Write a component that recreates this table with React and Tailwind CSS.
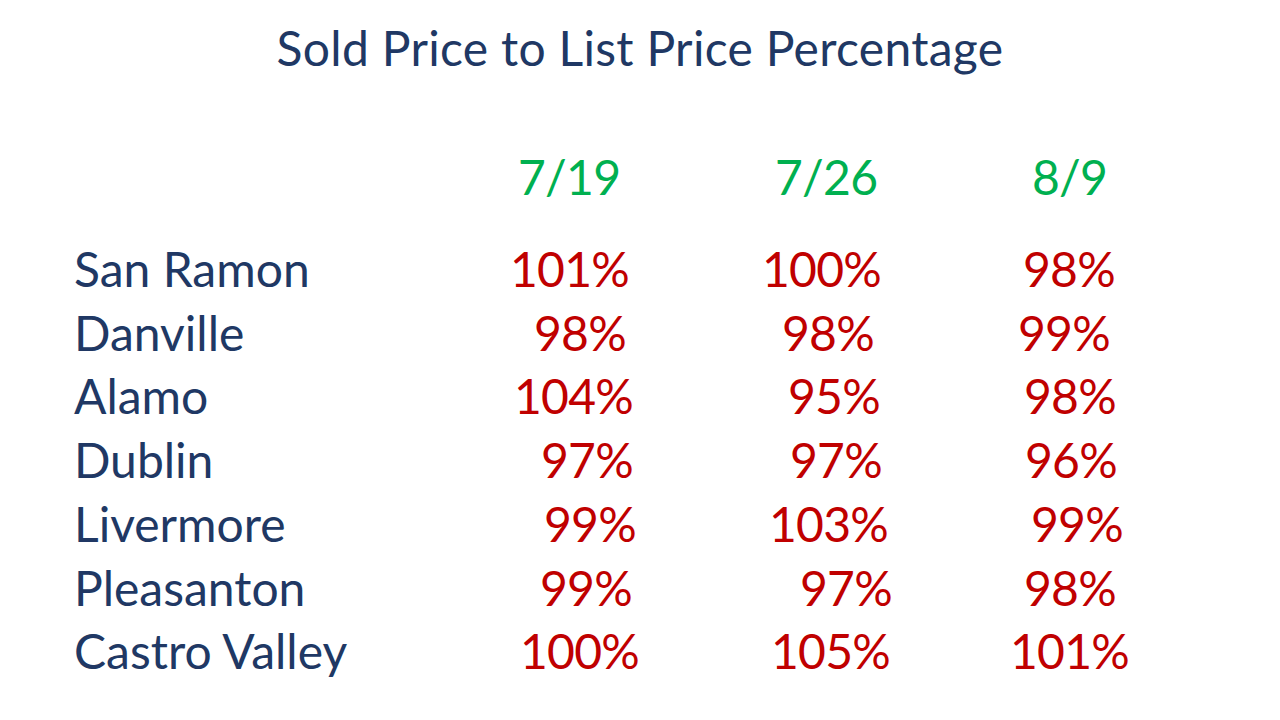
const rows = [
  { name: 'San Ramon', vals: [['101%', 10], ['100%', 12], ['98%', 23]] },
  { name: 'Danville', vals: [['98%', 34], ['98%', 32], ['99%', 18]] },
  { name: 'Alamo', vals: [['104%', 14], ['95%', 38], ['98%', 24]] },
  { name: 'Dublin', vals: [['97%', 41], ['97%', 40], ['96%', 25]] },
  { name: 'Livermore', vals: [['99%', 44], ['103%', 19], ['99%', 31]] },
  { name: 'Pleasanton', vals: [['99%', 40], ['97%', 50], ['98%', 24]] },
  { name: 'Castro Valley', vals: [['100%', 20], ['105%', 21], ['101%', 10]] },
];

const headers = [['7/19', 18], ['7/26', 25], ['8/9', 32]];

export default function App() {
  return (
    <div
      className="w-[1280px] h-[720px] bg-white overflow-hidden"
      style={{ fontFamily: 'Lato, "Open Sans", sans-serif' }}
    >
      <h1 className="pt-[16px] text-center text-[48px] leading-[64px] tracking-[0.3px] text-[#203864]">
        Sold Price to List Price Percentage
      </h1>

      <div className="mt-[65px] flex pl-[500px] text-[48px] leading-[64px] tracking-[-0.75px] text-[#00b050]">
        {headers.map(([h, off]) => (
          <div key={h} className="w-[250px]">
            <span style={{ marginLeft: off }}>{h}</span>
          </div>
        ))}
      </div>

      <div className="mt-[28px] flex flex-col">
        {rows.map((r) => (
          <div key={r.name} className="flex pl-[74px] text-[48px] leading-[63.7px]">
            <div className="w-[426px] text-[#203864]">{r.name}</div>
            {r.vals.map(([v, off], i) => (
              <div key={i} className="w-[250px] tracking-[-0.75px] text-[#c00000]">
                <span style={{ marginLeft: off }}>{v}</span>
              </div>
            ))}
          </div>
        ))}
      </div>
    </div>
  );
}
